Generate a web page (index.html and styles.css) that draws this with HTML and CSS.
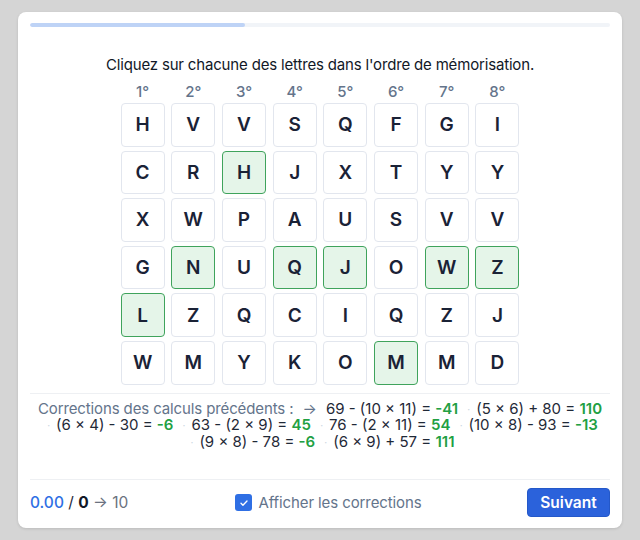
FILE: index.html
```html
<!DOCTYPE html>
<html lang="fr">
<head>
<meta charset="utf-8">
<title>Mémorisation</title>
<link rel="stylesheet" href="styles.css">
</head>
<body>
<main class="card">
  <div class="progress"><div class="progress-fill" style="width:37%"></div></div>

  <p class="instruction">Cliquez sur chacune des lettres dans l'ordre de mémorisation.</p>

  <div class="board">
    <div class="col-head">1°</div><div class="col-head">2°</div><div class="col-head">3°</div><div class="col-head">4°</div><div class="col-head">5°</div><div class="col-head">6°</div><div class="col-head">7°</div><div class="col-head">8°</div>

    <button class="cell">H</button><button class="cell">V</button><button class="cell">V</button><button class="cell">S</button><button class="cell">Q</button><button class="cell">F</button><button class="cell">G</button><button class="cell">I</button>

    <button class="cell">C</button><button class="cell">R</button><button class="cell on">H</button><button class="cell">J</button><button class="cell">X</button><button class="cell">T</button><button class="cell">Y</button><button class="cell">Y</button>

    <button class="cell">X</button><button class="cell">W</button><button class="cell">P</button><button class="cell">A</button><button class="cell">U</button><button class="cell">S</button><button class="cell">V</button><button class="cell">V</button>

    <button class="cell">G</button><button class="cell on">N</button><button class="cell">U</button><button class="cell on">Q</button><button class="cell on">J</button><button class="cell">O</button><button class="cell on">W</button><button class="cell on">Z</button>

    <button class="cell on">L</button><button class="cell">Z</button><button class="cell">Q</button><button class="cell">C</button><button class="cell">I</button><button class="cell">Q</button><button class="cell">Z</button><button class="cell">J</button>

    <button class="cell">W</button><button class="cell">M</button><button class="cell">Y</button><button class="cell">K</button><button class="cell">O</button><button class="cell on">M</button><button class="cell">M</button><button class="cell">D</button>
  </div>

  <section class="corrections">
    <span class="label">Corrections des calculs précédents : <span class="arrow">→</span></span>
    <span class="calc">69 - (10 × 11) = <b>-41</b></span>
    <span class="calc"><i class="dot">·</i>(5 × 6) + 80 = <b>110</b></span>
    <span class="calc"><i class="dot">·</i>(6 × 4) - 30 = <b>-6</b></span>
    <span class="calc"><i class="dot">·</i>63 - (2 × 9) = <b>45</b></span>
    <span class="calc"><i class="dot">·</i>76 - (2 × 11) = <b>54</b></span>
    <span class="calc"><i class="dot">·</i>(10 × 8) - 93 = <b>-13</b></span>
    <span class="calc"><i class="dot">·</i>(9 × 8) - 78 = <b>-6</b></span>
    <span class="calc"><i class="dot">·</i>(6 × 9) + 57 = <b>111</b></span>
  </section>

  <footer class="footer">
    <div class="score"><span class="score-val">0.00</span> <span class="score-sep">/</span> <b class="score-total">0</b> <span class="score-goal">→ 10</span></div>
    <label class="toggle">
      <span class="checkbox"><svg viewBox="0 0 16 16" width="12" height="12"><path d="M4 8.3l2.6 2.6L12 5.4" fill="none" stroke="#fff" stroke-width="1.8" stroke-linecap="round" stroke-linejoin="round"/></svg></span>
      <span class="toggle-text">Afficher les corrections</span>
    </label>
    <button class="next">Suivant</button>
  </footer>
</main>
</body>
</html>
```

FILE: styles.css
```css
* { box-sizing: border-box; }
html, body { margin: 0; padding: 0; }
body {
  background: #d5d5d5;
  font-family: Inter, "Noto Sans", "Liberation Sans", sans-serif;
  color: #1e293b;
  padding: 12px 18px 12px 18px;
}
.card {
  background: #fff;
  border-radius: 8px;
  height: 516px;
  padding: 11px 12px 0 12px;
  display: flex;
  flex-direction: column;
  box-shadow: 0 1px 3px rgba(0,0,0,0.12);
}
.progress {
  height: 4px;
  background: #f1f4f8;
  border-radius: 2px;
  overflow: hidden;
}
.progress-fill {
  height: 100%;
  background: #bed3f6;
  border-radius: 2px;
}
.instruction {
  margin: 28px 0 0 0;
  text-align: center;
  font-size: 15px;
  line-height: 20px;
  color: #111827;
  letter-spacing: -0.17px;
}
.board {
  margin: 2px auto 0 auto;
  display: grid;
  grid-template-columns: repeat(8, 44px);
  grid-template-rows: 22px;
  grid-auto-rows: 43.6px;
  column-gap: 6.7px;
  row-gap: 4px;
}
.board .col-head {
  height: 22px;
  align-self: end;
  margin-bottom: -4px;
  text-align: center;
  font-size: 15px;
  line-height: 22px;
  font-weight: 500;
  color: #64748b;
}
.cell {
  width: 44px;
  height: 43.6px;
  padding: 0;
  margin: 0;
  border: 1px solid #e2e6ee;
  border-radius: 4px;
  background: #fff;
  font-family: inherit;
  font-size: 19px;
  font-weight: 600;
  color: #1a2236;
  display: flex;
  align-items: center;
  justify-content: center;
}
.cell.on {
  background: #e5f5e9;
  border: 1.5px solid #3fa35c;
}
.corrections {
  margin-top: 8px;
  border-top: 1px solid #eef0f3;
  padding: 7px 0 0 0;
  text-align: center;
  font-size: 15px;
  line-height: 16.5px;
  color: #1f2937;
  height: 86.5px;
}
.corrections .label { color: #64748b; letter-spacing: -0.12px; }
.corrections .arrow { color: #64748b; margin: 0 5px; }
.calc { white-space: nowrap; display: inline-block; }
.calc b { color: #22a043; font-weight: 600; }
.dot {
  font-style: normal;
  color: #cbd5e1;
  font-size: 10px;
  margin: 0 6px 0 5px;
  vertical-align: 1px;
}
.footer {
  border-top: 1px solid #eef0f3;
  display: flex;
  align-items: center;
  justify-content: space-between;
  flex: 1;
  padding-bottom: 3px;
}
.score { font-size: 15.5px; color: #64748b; width: 194px; }
.score-val { color: #2f6fe4; font-weight: 500; }
.score-sep { color: #1e293b; }
.score-total { color: #111827; font-weight: 700; }
.score-goal { color: #6b7280; }
.toggle {
  display: flex;
  align-items: center;
  gap: 6px;
  font-size: 15px;
  letter-spacing: -0.1px;
  color: #64748b;
  margin-right: 94px;
}
.checkbox {
  width: 17px;
  height: 17px;
  border-radius: 3px;
  background: #2f6fe4;
  display: flex;
  align-items: center;
  justify-content: center;
}
.next {
  width: 83px;
  height: 29px;
  background: #2b62db;
  color: #fff;
  border: 1px solid #2458c9;
  border-radius: 4px;
  font-family: inherit;
  font-size: 15.5px;
  font-weight: 600;
  padding: 0;
}
```
